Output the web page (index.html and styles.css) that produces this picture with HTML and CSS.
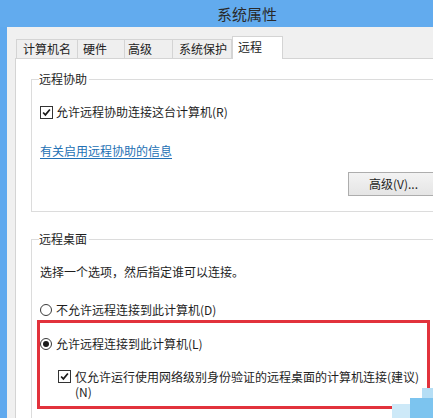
FILE: index.html
```html
<!DOCTYPE html>
<html lang="zh-CN">
<head>
<meta charset="utf-8">
<title>系统属性</title>
<link rel="stylesheet" href="styles.css">
</head>
<body>
<div class="window">
  <div class="titlebar">系统属性</div>
  <div class="frame">
    <div class="tabs">
      <div class="tab t1">计算机名</div>
      <div class="tab t2">硬件</div>
      <div class="tab t3">高级</div>
      <div class="tab t4">系统保护</div>
      <div class="tab active">远程</div>
    </div>
    <div class="panel">
      <div class="group g1">
        <div class="group-title">远程协助</div>
        <div class="row r-assist">
          <span class="checkbox"><svg viewBox="0 0 13 13" width="13" height="13"><path d="M2.5 6.5 L5.2 9.3 L10.5 3" fill="none" stroke="#1a1a1a" stroke-width="2"/></svg></span>
          <span>允许远程协助连接这台计算机(R)</span>
        </div>
        <div class="row r-link"><a class="link">有关启用远程协助的信息</a></div>
        <div class="btn-row"><div class="btn">高级(V)...</div></div>
      </div>
      <div class="group g2">
        <div class="group-title">远程桌面</div>
        <div class="row r-intro">选择一个选项，然后指定谁可以连接。</div>
        <div class="row r-radio1">
          <span class="radio"></span>
          <span>不允许远程连接到此计算机(D)</span>
        </div>
        <div class="highlight">
          <div class="row r-radio2">
            <span class="radio on"><span class="dot"></span></span>
            <span>允许远程连接到此计算机(L)</span>
          </div>
          <div class="row r-nla">
            <span class="checkbox"><svg viewBox="0 0 13 13" width="13" height="13"><path d="M2.5 6.5 L5.2 9.3 L10.5 3" fill="none" stroke="#1a1a1a" stroke-width="2"/></svg></span>
            <span class="nla-text"><span class="line">仅允许运行使用网络级别身份验证的远程桌面的计算机连接(建议)</span><span class="line">(N)</span></span>
          </div>
        </div>
      </div>
    </div>
  </div>
  <div class="blotch b1"></div>
  <div class="blotch b2"></div>
  <div class="blotch b3"></div>
</div>
</body>
</html>
```

FILE: styles.css
```css
* { box-sizing: border-box; }
html, body { margin: 0; padding: 0; }
body {
  width: 433px;
  height: 418px;
  overflow: hidden;
  font-family: "Noto Sans CJK SC", "Noto Sans", sans-serif;
  font-size: 12px;
  color: #1e1e1e;
  background: #ffffff;
}
.window {
  position: relative;
  width: 433px;
  height: 418px;
  overflow: hidden;
  display: flex;
  flex-direction: column;
  background: #5fa9ee;
}
.titlebar {
  height: 27px;
  line-height: 27px;
  padding-left: 217px;
  font-size: 15px;
  color: #2a2a2a;
  background: #62abee;
}
.frame {
  flex: 1;
  min-height: 0;
  margin-left: 7px;
  background: #f0f0f0;
  display: flex;
  flex-direction: column;
  padding-top: 9px;
}
.tabs {
  display: flex;
  align-items: flex-end;
  height: 22px;
  padding-left: 9px;
  position: relative;
  z-index: 2;
}
.tab {
  height: 19px;
  line-height: 18px;
  border-top: 1px solid #d4d4d4;
  border-left: 1px solid #d4d4d4;
  background: #efefef;
  white-space: nowrap;
  color: #222;
}
.t1 { width: 61px; padding-left: 6px; }
.t2 { width: 47px; padding-left: 5px; }
.t3 { width: 48px; padding-left: 3px; }
.t4 { width: 60px; padding-left: 6px; border-right: 1px solid #d4d4d4; }
.tab.active {
  width: 51px;
  height: 23px;
  margin-bottom: -1px;
  padding-left: 5px;
  line-height: 19px;
  background: #ffffff;
  border: 1px solid #d4d4d4;
  border-bottom: none;
}
.panel {
  flex: 1;
  min-height: 0;
  width: 440px;
  overflow: hidden;
  margin-left: 8px;
  background: #ffffff;
  border-top: 1px solid #d4d4d4;
  border-left: 1px solid #d4d4d4;
  padding-left: 15px;
  padding-top: 20px;
}
.group {
  border: 1px solid #dcdcdc;
  width: 430px;
  padding: 0 8px 0 8px;
}
.g1 { padding-bottom: 15px; }
.g2 { margin-top: 27px; height: 200px; }
.group-title {
  width: fit-content;
  margin-top: -8px;
  margin-left: -1px;
  padding: 0 2px 0 0;
  background: #ffffff;
  line-height: 14px;
  height: 14px;
}
.row {
  display: flex;
  align-items: center;
  height: 16px;
  line-height: 16px;
  white-space: nowrap;
}
.r-assist { margin-top: 18px; }
.r-link { margin-top: 23px; }
.link {
  color: #2270b4;
  text-decoration: underline;
  text-underline-offset: 2px;
}
.btn-row {
  margin-top: 13px;
  display: flex;
  justify-content: flex-end;
}
.btn {
  width: 104px;
  height: 24px;
  line-height: 22px;
  padding-left: 20px;
  border: 1px solid #adadad;
  background: linear-gradient(#f3f3f3, #e5e5e5);
  white-space: nowrap;
}
.checkbox {
  width: 13px;
  height: 13px;
  border: 1px solid #333333;
  background: #ffffff;
  display: flex;
  align-items: center;
  justify-content: center;
  margin-right: 3px;
  flex: none;
}
.checkbox svg { width: 11px; height: 11px; display: block; }
.radio {
  width: 12px;
  height: 12px;
  border: 1px solid #3a3a3a;
  border-radius: 50%;
  background: #ffffff;
  margin-right: 4px;
  flex: none;
  display: flex;
  align-items: center;
  justify-content: center;
}
.radio .dot {
  width: 6px;
  height: 6px;
  border-radius: 50%;
  background: #1a1a1a;
}
.r-intro { margin-top: 18px; }
.r-radio1 { margin-top: 22px; }
.highlight {
  width: 393px;
  margin-top: 2px;
  margin-left: -3px;
  border: 3px solid #e2323c;
  padding: 13px 0 7px 0;
}
.r-nla {
  margin-top: 17px;
  height: auto;
  align-items: flex-start;
  padding-left: 18px;
}
.r-nla .checkbox { margin-top: 1px; margin-right: 4px; }
.nla-text { display: flex; flex-direction: column; }
.line { display: block; height: 15px; line-height: 15px; }
.blotch {
  position: absolute;
}
.b1 { left: 410px; top: 398px; width: 23px; height: 20px; background: #7cc4ef; }
.b2 { left: 392px; top: 404px; width: 18px; height: 14px; background: #cde9f8; }
.b3 { left: 422px; top: 388px; width: 11px; height: 10px; background: #b5def5; }
```
